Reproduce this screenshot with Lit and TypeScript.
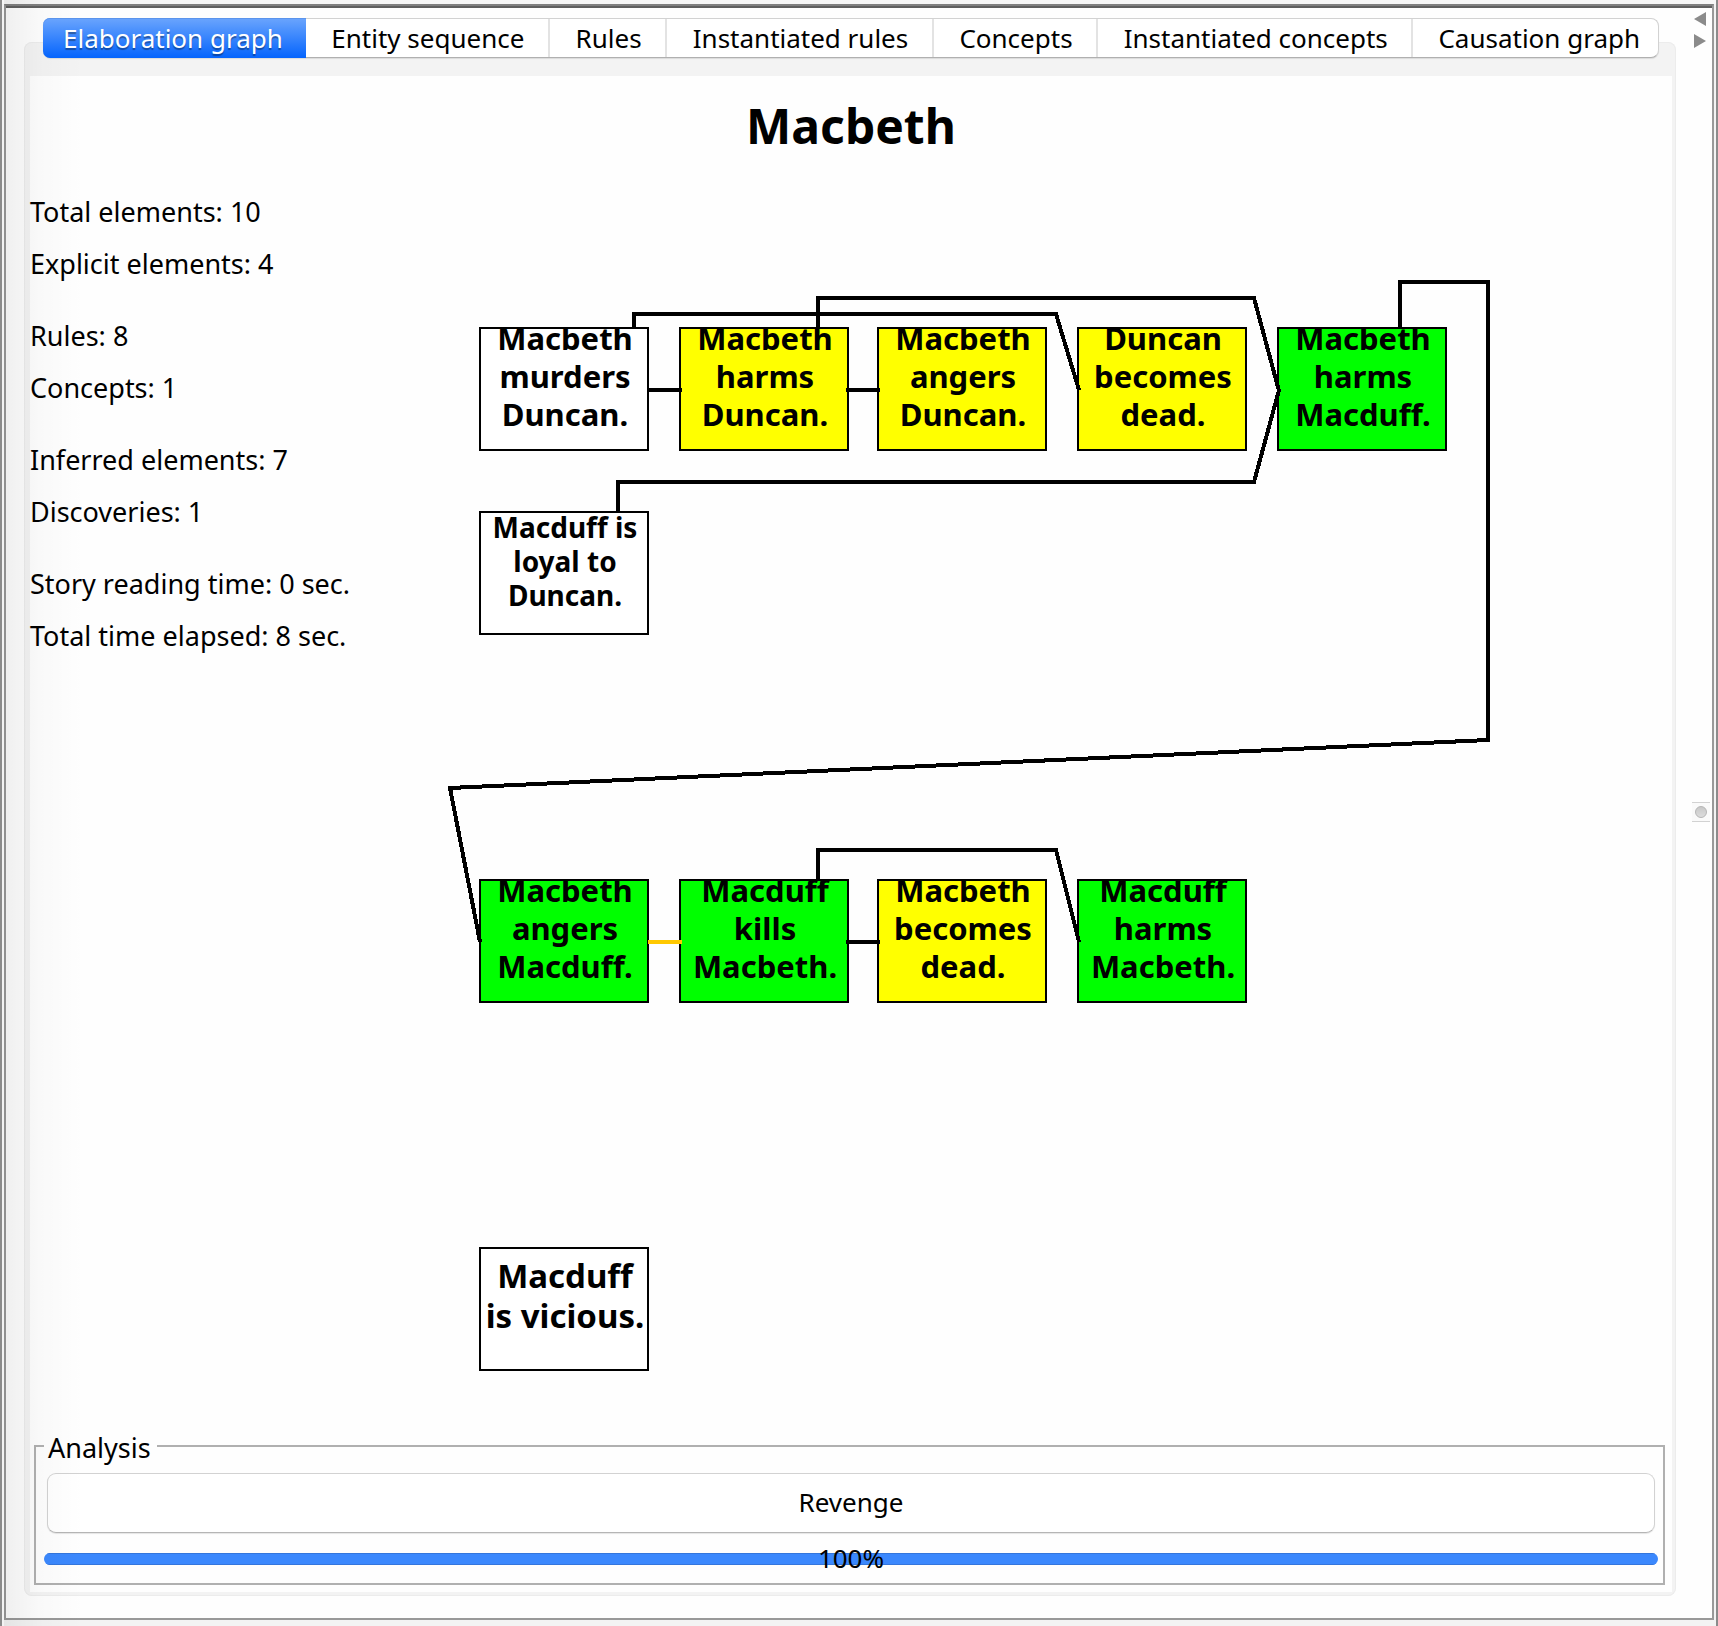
import { LitElement, html, css, svg } from "lit";
import { customElement, state } from "lit/decorators.js";
import { classMap } from "lit/directives/class-map.js";
import { styleMap } from "lit/directives/style-map.js";

type Kind = "explicit" | "inferred" | "concept";
type Size = "small" | "medium" | "large";

interface GraphNode {
  x: number;
  y: number;
  kind: Kind;
  size: Size;
  lines: string[];
}

interface GraphEdge {
  points: string;
  leadsTo?: boolean;
}

const TABS = [
  "Elaboration graph",
  "Entity sequence",
  "Rules",
  "Instantiated rules",
  "Concepts",
  "Instantiated concepts",
  "Causation graph",
];

const STATS: [string, string][][] = [
  [["Total elements", "10"], ["Explicit elements", "4"]],
  [["Rules", "8"], ["Concepts", "1"]],
  [["Inferred elements", "7"], ["Discoveries", "1"]],
  [["Story reading time", "0 sec."], ["Total time elapsed", "8 sec."]],
];

// Coordinates are relative to the graph canvas.
const NODES: GraphNode[] = [
  { x: 49, y: 141, kind: "explicit", size: "medium", lines: ["Macbeth", "murders", "Duncan."] },
  { x: 249, y: 141, kind: "inferred", size: "medium", lines: ["Macbeth", "harms", "Duncan."] },
  { x: 447, y: 141, kind: "inferred", size: "medium", lines: ["Macbeth", "angers", "Duncan."] },
  { x: 647, y: 141, kind: "inferred", size: "medium", lines: ["Duncan", "becomes", "dead."] },
  { x: 847, y: 141, kind: "concept", size: "medium", lines: ["Macbeth", "harms", "Macduff."] },
  { x: 49, y: 325, kind: "explicit", size: "small", lines: ["Macduff is", "loyal to", "Duncan."] },
  { x: 49, y: 693, kind: "concept", size: "medium", lines: ["Macbeth", "angers", "Macduff."] },
  { x: 249, y: 693, kind: "concept", size: "medium", lines: ["Macduff", "kills", "Macbeth."] },
  { x: 447, y: 693, kind: "inferred", size: "medium", lines: ["Macbeth", "becomes", "dead."] },
  { x: 647, y: 693, kind: "concept", size: "medium", lines: ["Macduff", "harms", "Macbeth."] },
  { x: 49, y: 1061, kind: "explicit", size: "large", lines: ["Macduff", "is vicious."] },
];

const EDGES: GraphEdge[] = [
  { points: "218,204 252,204" },
  { points: "416,204 450,204" },
  { points: "204,143 204,128 626,128 649,204" },
  { points: "388,143 388,112 824,112 849,205" },
  { points: "188,327 188,296 824,296 849,204" },
  { points: "970,143 970,96 1058,96 1058,554 20,602 50,756" },
  { points: "218,756 252,756", leadsTo: true },
  { points: "416,756 450,756" },
  { points: "388,695 388,664 626,664 649,756" },
];

@customElement("app-root")
export class AppRoot extends LitElement {
  static styles = css`
    :host {
      display: block;
      color: #000;
      font-family: "Noto Sans", "Open Sans", sans-serif;
      font-size: 26px;
    }
    * {
      box-sizing: border-box;
    }
    button {
      font: inherit;
      color: inherit;
      margin: 0;
      padding: 0;
      border: 0;
      background: none;
    }
    .window {
      position: relative;
      display: flex;
      flex-direction: column;
      min-height: 100vh;
      padding: 4px 2px 6px;
      border: solid #8b8b8b;
      border-width: 0 2px;
      background: linear-gradient(#f7f7f7 4px, #f3f3f3 4px);
    }
    .window::after {
      content: "";
      position: absolute;
      inset: 0 auto 0 2px;
      width: 80px;
      background: linear-gradient(90deg, rgba(0, 0, 0, 0.06), rgba(0, 0, 0, 0.02) 45%, rgba(0, 0, 0, 0));
      pointer-events: none;
    }
    .frame {
      flex: 1;
      display: flex;
      border: 2px solid #999;
      border-top-color: #808080;
      box-shadow: inset 0 2px #606060;
      background: #fefefe;
    }
    .pane {
      flex: 1;
      min-width: 0;
      display: flex;
      flex-direction: column;
      padding: 12px 0 22px 18px;
    }
    .tabs {
      position: relative;
      z-index: 1;
      display: flex;
      margin: 0 17px -16px 19px;
      border: 1px solid #d2d2d2;
      border-bottom-color: #b0b0b0;
      border-radius: 8px;
      background: #fff;
      box-shadow: 0 1px 1px rgba(0, 0, 0, 0.1);
    }
    .tab {
      flex: 1 1 auto;
      height: 38px;
      padding-left: 2px;
      line-height: 38px;
      white-space: nowrap;
      border-right: 2px solid #e3e3e3;
    }
    .tab:last-child {
      flex: none;
      padding: 0 18px 0 25px;
      border-right: 0;
    }
    .tab:first-child {
      flex: none;
      padding: 0 23px 0 20px;
    }
    .tab.selected {
      height: 40px;
      margin: -1px 0 -1px -1px;
      border-right: 0;
      border-radius: 7px 0 0 7px;
      color: #fff;
      text-shadow: 0 2px 1px rgba(0, 0, 0, 0.35);
      background: linear-gradient(#6ba5fd, #0464fd);
      box-shadow: inset 0 1px #5b94ec;
    }
    .panel {
      flex: 1;
      display: flex;
      padding: 34px 4px 4px 6px;
      border-radius: 8px;
      background: #f3f3f3;
      box-shadow: inset 0 0 0 1px #ececec;
    }
    .content {
      flex: 1;
      min-width: 0;
      display: flex;
      flex-direction: column;
      background: #fefefe;
    }
    .title {
      margin: 0;
      height: 110px;
      padding-top: 15px;
      line-height: 70px;
      font-size: 48px;
      font-weight: 700;
      text-align: center;
    }
    .body {
      flex: 1;
      display: grid;
      grid-template-columns: 400px 1fr;
    }
    .stats {
      display: flex;
      flex-direction: column;
      gap: 20px;
      font-size: 27px;
      line-height: 52px;
      white-space: nowrap;
    }
    .graph {
      position: relative;
    }
    .edges {
      position: absolute;
      inset: 0;
      width: 100%;
      height: 100%;
      overflow: visible;
      fill: none;
      stroke: #000;
      stroke-width: 4px;
      shape-rendering: crispEdges;
    }
    .leads-to {
      stroke: #ffc800;
    }
    .node {
      position: absolute;
      width: 170px;
      height: 124px;
      padding-left: 2px;
      border: 2px solid #000;
      font-weight: 700;
      text-align: center;
      white-space: nowrap;
    }
    .explicit {
      background: #fff;
    }
    .inferred {
      background: #ff0;
    }
    .concept {
      background: #0f0;
    }
    .line {
      display: flex;
      justify-content: center;
    }
    .medium {
      font-size: 31px;
      line-height: 38px;
    }
    .medium .line:first-child {
      margin-top: -10px;
    }
    .small {
      font-size: 28px;
      line-height: 34px;
    }
    .small .line:first-child {
      margin-top: -3px;
    }
    .large {
      font-size: 33px;
      line-height: 40px;
      padding-top: 7px;
    }
    .analysis {
      min-width: 0;
      margin: 0 7px 7px 4px;
      padding: 10px 5px 18px 8px;
      border: 2px solid #b0b0b0;
    }
    .legend {
      padding: 4px 6px 0 4px;
      font-size: 27px;
      line-height: 30px;
    }
    .inner {
      display: flex;
      flex-direction: column;
      gap: 20px;
    }
    .run {
      height: 60px;
      margin: 0 3px;
      padding-bottom: 2px;
      border: 1px solid #d2d2d2;
      border-bottom-color: #b5b5b5;
      border-radius: 9px;
      background: #fff;
      box-shadow: 0 1px 1px rgba(0, 0, 0, 0.1);
    }
    .meter {
      display: grid;
      align-items: start;
      height: 12px;
      line-height: 10px;
    }
    .bar,
    .percent {
      grid-area: 1 / 1;
    }
    .bar {
      appearance: none;
      width: 100%;
      height: 12px;
      border: 0;
      border-radius: 6px;
      overflow: hidden;
      background: #e4e4e4;
    }
    .bar::-webkit-progress-bar {
      background: #e4e4e4;
    }
    .bar::-webkit-progress-value {
      background: #3b88fd;
      box-shadow: inset 0 1px #3476dc, inset 0 -1px #3476dc;
    }
    .percent {
      z-index: 1;
      text-align: center;
    }
    .splitter {
      display: grid;
      grid-template-rows: 1fr auto 1fr;
      justify-items: center;
      width: 36px;
      padding: 0 2px 0 16px;
    }
    .arrows {
      display: flex;
      flex-direction: column;
      gap: 8px;
      padding: 6px 2px 0 0;
    }
    .arrow {
      display: block;
      height: 14px;
    }
    .arrow svg {
      display: block;
      fill: #8b8b8b;
    }
    .grip {
      width: 18px;
      height: 20px;
      border: solid #d2d2d2;
      border-width: 1px 0;
      background: #fafafa;
      display: grid;
      place-items: center;
    }
    .knob {
      width: 12px;
      height: 12px;
      border: 1px solid #b5b5b5;
      border-radius: 50%;
      background: linear-gradient(#c8c8c8, #dcdcdc);
    }
  `;

  @state() private selected = 0;

  private renderTab = (label: string, index: number) => html`
    <button
      class=${classMap({ tab: true, selected: index === this.selected })}
      role="tab"
      aria-selected=${index === this.selected}
      @click=${() => (this.selected = index)}
    >${label}</button>
  `;

  private renderNode = (node: GraphNode) => html`
    <div
      class=${classMap({ node: true, [node.kind]: true, [node.size]: true })}
      style=${styleMap({ left: `${node.x}px`, top: `${node.y}px` })}
    >${node.lines.map((line) => html`<div class="line">${line}</div>`)}</div>
  `;

  render() {
    return html`
      <div class="window">
        <div class="frame">
          <div class="pane">
            <div class="tabs" role="tablist">${TABS.map(this.renderTab)}</div>
            <div class="panel" role="tabpanel">
              <div class="content">
                <h1 class="title">Macbeth</h1>
                <div class="body">
                  <div class="stats">
                    ${STATS.map((group) => html`
                      <div class="group">
                        ${group.map(([name, value]) => html`<div>${name}: ${value}</div>`)}
                      </div>
                    `)}
                  </div>
                  <div class="graph">
                    ${NODES.map(this.renderNode)}
                    <svg class="edges" aria-hidden="true">
                      ${EDGES.map((edge) => svg`
                        <polyline class=${classMap({ "leads-to": !!edge.leadsTo })} points=${edge.points} />
                      `)}
                    </svg>
                  </div>
                </div>
                <fieldset class="analysis">
                  <legend class="legend">Analysis</legend>
                  <div class="inner">
                    <button class="run">Revenge</button>
                    <div class="meter">
                      <progress class="bar" aria-label="Analysis progress" max="100" value="100"></progress>
                      <span class="percent">100%</span>
                    </div>
                  </div>
                </fieldset>
              </div>
            </div>
          </div>
          <div class="splitter">
            <div class="arrows">
              <button class="arrow" aria-label="Collapse left">
                <svg width="12" height="14"><path d="M12 0V14L0 7Z" /></svg>
              </button>
              <button class="arrow" aria-label="Collapse right">
                <svg width="12" height="14"><path d="M0 0V14L12 7Z" /></svg>
              </button>
            </div>
            <div class="grip"><div class="knob"></div></div>
          </div>
        </div>
      </div>
    `;
  }
}
